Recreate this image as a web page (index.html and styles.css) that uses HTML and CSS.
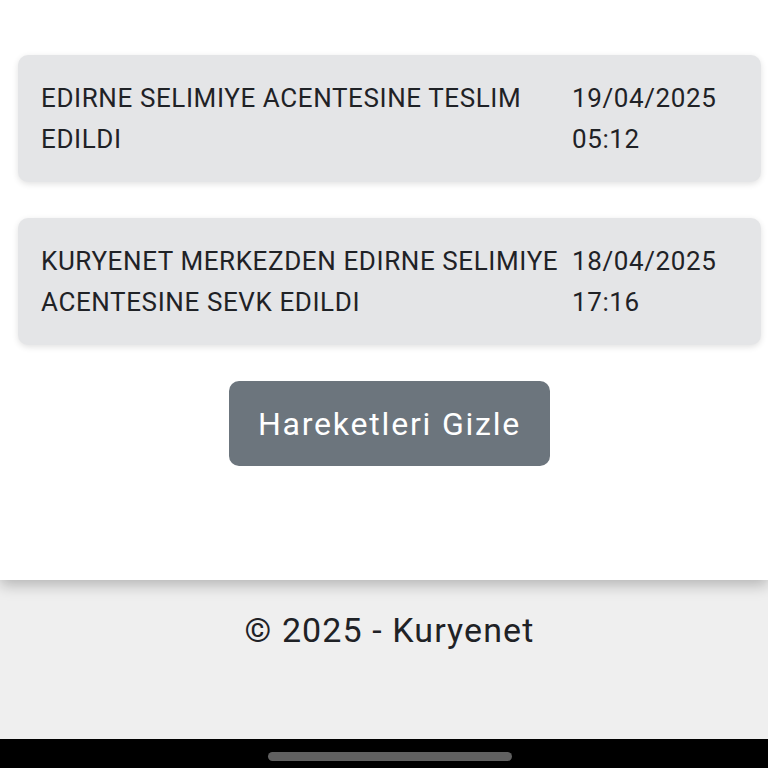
FILE: index.html
```html
<!DOCTYPE html>
<html lang="tr">
<head>
  <meta charset="UTF-8" />
  <meta name="viewport" content="width=device-width, initial-scale=1.0"/>
  <title>Kargo Takip</title>
  <link rel="stylesheet" href="styles.css">
</head>
<body>

  <main class="card">
    <div class="movement">
      <div class="desc">EDIRNE SELIMIYE ACENTESINE TESLIM EDILDI</div>
      <div class="date">19/04/2025<br>05:12</div>
    </div>

    <div class="movement">
      <div class="desc">KURYENET MERKEZDEN EDIRNE SELIMIYE ACENTESINE SEVK EDILDI</div>
      <div class="date">18/04/2025<br>17:16</div>
    </div>

    <div class="actions">
      <button class="btn-hide">Hareketleri Gizle</button>
    </div>
  </main>

  <footer class="footer">
    &copy; 2025 - Kuryenet
  </footer>

  <div class="nav-bar">
    <span class="home-pill"></span>
  </div>

</body>
</html>
```

FILE: styles.css
```css
* {
  margin: 0;
  padding: 0;
  box-sizing: border-box;
}

html, body {
  height: 100%;
}

body {
  font-family: Roboto, 'Noto Sans', sans-serif;
  background: #efefef;
  color: #1f2226;
  display: flex;
  flex-direction: column;
  overflow: hidden;
}

.card {
  background: #fff;
  padding: 55px 7px 114px 18px;
  box-shadow: 0 5px 14px rgba(0, 0, 0, 0.25);
  position: relative;
  z-index: 1;
}

.movement {
  display: grid;
  grid-template-columns: 1fr 166px;
  column-gap: 8px;
  background: #e4e5e7;
  border-radius: 10px;
  padding: 23px 23px 22px 23px;
  margin-bottom: 36px;
  font-size: 26px;
  letter-spacing: 0.6px;
  line-height: 41px;
  box-shadow: 0 2px 6px rgba(0, 0, 0, 0.12);
}

.actions {
  text-align: center;
  margin-top: 2px;
}

.btn-hide {
  width: 321px;
  height: 85px;
  background: #6c757d;
  color: #fff;
  border: none;
  border-radius: 10px;
  font-family: inherit;
  font-size: 32px;
  letter-spacing: 1.8px;
  cursor: pointer;
}

.footer {
  height: 159px;
  padding-top: 30px;
  padding-left: 11px;
  text-align: center;
  font-size: 34px;
  letter-spacing: 1.1px;
  line-height: 40px;
}

.nav-bar {
  flex: 1;
  background: #000;
  display: flex;
  justify-content: center;
  padding-top: 13px;
  padding-left: 12px;
}

.home-pill {
  width: 244px;
  height: 9px;
  border-radius: 5px;
  background: #606060;
}
```
